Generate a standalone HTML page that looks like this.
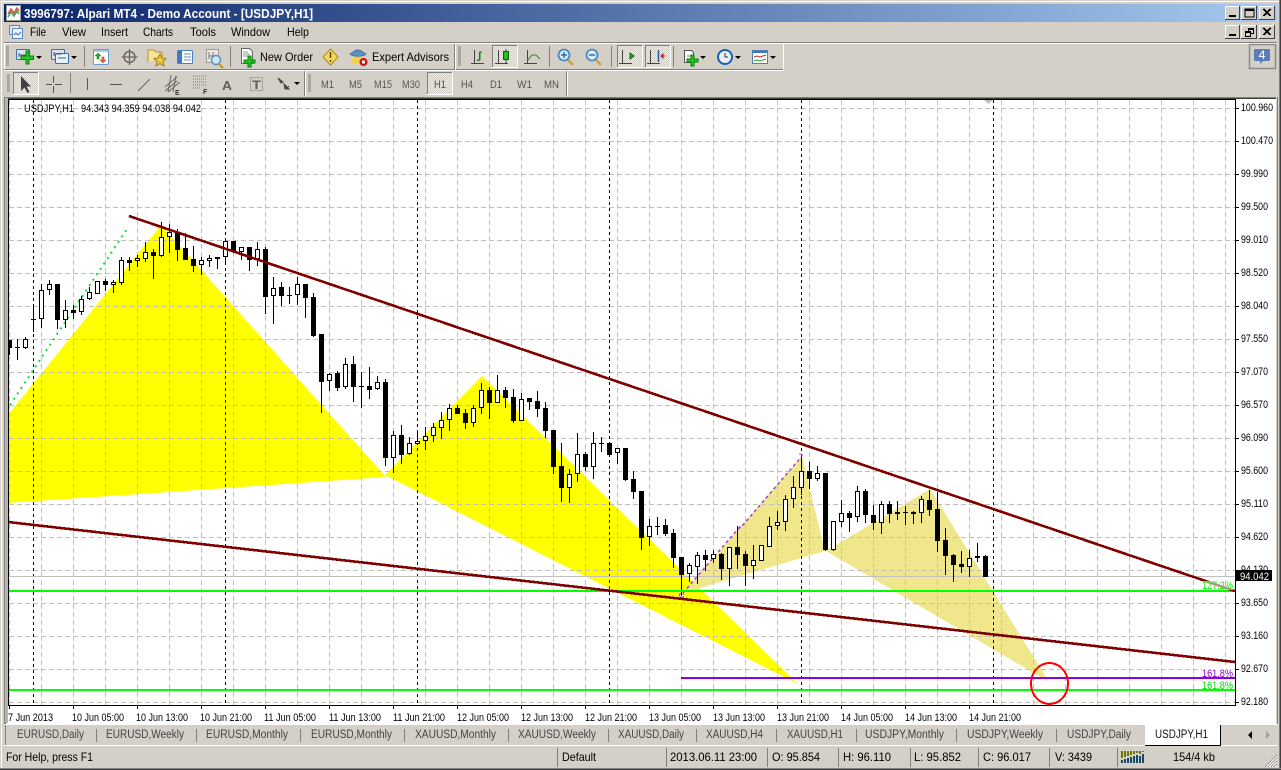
<!DOCTYPE html>
<html><head><meta charset="utf-8"><title>MT4</title>
<style>
html,body{margin:0;padding:0;background:#d4d0c8;overflow:hidden}
svg{display:block}
text{font-family:"Liberation Sans",sans-serif;font-size:11px;fill:#000;white-space:pre}
.ax{font-size:11px}
.tl{font-size:11px;fill:#000}
.tab{font-size:11.500px;fill:#444}
.tf{font-size:11px;fill:#555}
.c{shape-rendering:crispEdges}
</style></head><body>
<svg width="1281" height="770" viewBox="0 0 1281 770" xmlns="http://www.w3.org/2000/svg">
<defs>
<linearGradient id="tg" x1="0" x2="1" y1="0" y2="0"><stop offset="0" stop-color="#0a246a"/><stop offset="1" stop-color="#a6caf0"/></linearGradient>
<pattern id="chk" width="2" height="2" patternUnits="userSpaceOnUse"><rect width="2" height="2" fill="#ebe9e5"/><rect width="1" height="1" fill="#d4d0c8"/><rect x="1" y="1" width="1" height="1" fill="#d4d0c8"/></pattern>
<clipPath id="yc"><polygon points="8,415 161,225 386,477 8,503"/><polygon points="385,475 482,376 798,684"/></clipPath>
<clipPath id="pl"><rect x="9" y="100" width="1226" height="605"/></clipPath>
</defs>
<rect width="1281" height="770" fill="#d4d0c8"/>
<g class="c">
<rect x="1" y="1" width="1278" height="1" fill="#fff"/>
<rect x="1" y="1" width="1" height="767" fill="#fff"/>
<rect x="1279" y="0" width="1" height="769" fill="#808080"/>
<rect x="1280" y="0" width="1" height="770" fill="#404040"/>
<rect x="0" y="768" width="1281" height="1" fill="#808080"/>
<rect x="0" y="769" width="1281" height="1" fill="#404040"/>
<rect x="4" y="4" width="1273" height="18" fill="url(#tg)"/>
</g>
<rect x="6.500" y="5.500" width="14" height="15" fill="#fff" stroke="#999"/>
<path d="M8 14l3-5 3 4 3-5 2 3" fill="none" stroke="#d05040" stroke-width="1.500"/>
<path d="M8 17l3-5 3 4 3-5 2 3" fill="none" stroke="#40a060" stroke-width="1.500"/>
<text x="24" y="18" textLength="289" lengthAdjust="spacingAndGlyphs" style="font-weight:bold;font-size:13px;fill:#fff">3996797: Alpari MT4 - Demo Account - [USDJPY,H1]</text>
<g class="c">
<rect x="1225" y="6" width="15" height="14" fill="#404040"/><rect x="1225" y="6" width="14" height="13" fill="#fff"/><rect x="1226" y="7" width="13" height="12" fill="#d4d0c8"/>
<rect x="1241" y="6" width="16" height="14" fill="#404040"/><rect x="1241" y="6" width="15" height="13" fill="#fff"/><rect x="1242" y="7" width="14" height="12" fill="#d4d0c8"/>
<rect x="1259" y="6" width="16" height="14" fill="#404040"/><rect x="1259" y="6" width="15" height="13" fill="#fff"/><rect x="1260" y="7" width="14" height="12" fill="#d4d0c8"/>
<rect x="1229" y="15" width="7" height="2" fill="#000"/>
<rect x="1245" y="9" width="9" height="8" fill="none" stroke="#000"/><rect x="1245" y="9" width="9" height="2" fill="#000"/>
<rect x="1225" y="25" width="15" height="14" fill="#404040"/><rect x="1225" y="25" width="14" height="13" fill="#fff"/><rect x="1226" y="26" width="13" height="12" fill="#d4d0c8"/>
<rect x="1241" y="25" width="16" height="14" fill="#404040"/><rect x="1241" y="25" width="15" height="13" fill="#fff"/><rect x="1242" y="26" width="14" height="12" fill="#d4d0c8"/>
<rect x="1259" y="25" width="16" height="14" fill="#404040"/><rect x="1259" y="25" width="15" height="13" fill="#fff"/><rect x="1260" y="26" width="14" height="12" fill="#d4d0c8"/>
<rect x="1229" y="34" width="7" height="2" fill="#000"/>
<rect x="1248.500" y="28.500" width="5" height="5" fill="none" stroke="#000"/><rect x="1245.500" y="31.500" width="5" height="5" fill="#d4d0c8" stroke="#000"/><rect x="1245" y="31" width="6" height="2" fill="#000"/><rect x="1248" y="28" width="6" height="2" fill="#000"/>
</g>
<path d="M1263 9l7 7M1264 9l7 7M1270 9l-7 7M1271 9l-7 7M1263 28l7 7M1264 28l7 7M1270 28l-7 7M1271 28l-7 7" stroke="#000" class="c"/>
<rect x="9.500" y="25.500" width="10" height="9" fill="#dbe8f8" stroke="#5a88c0"/><rect x="12.500" y="28.500" width="10" height="10" fill="#eef4fc" stroke="#5a88c0"/><path d="M14 35l2-2 2 2 3-3" stroke="#4070b0" fill="none"/>
<text x="30" y="36" textLength="16" lengthAdjust="spacingAndGlyphs" style="font-size:12px">File</text>
<text x="62" y="36" textLength="24" lengthAdjust="spacingAndGlyphs" style="font-size:12px">View</text>
<text x="101" y="36" textLength="27" lengthAdjust="spacingAndGlyphs" style="font-size:12px">Insert</text>
<text x="143" y="36" textLength="30" lengthAdjust="spacingAndGlyphs" style="font-size:12px">Charts</text>
<text x="190" y="36" textLength="26" lengthAdjust="spacingAndGlyphs" style="font-size:12px">Tools</text>
<text x="231" y="36" textLength="39" lengthAdjust="spacingAndGlyphs" style="font-size:12px">Window</text>
<text x="287" y="36" textLength="22" lengthAdjust="spacingAndGlyphs" style="font-size:12px">Help</text>
<g class="c">
<rect x="4" y="42" width="1273" height="1" fill="#808080"/><rect x="4" y="43" width="1273" height="1" fill="#fff"/>
<rect x="4" y="43" width="1" height="26" fill="#fff"/>
<rect x="4" y="69" width="480" height="1" fill="#808080"/><rect x="4" y="70" width="480" height="1" fill="#fff"/>
<rect x="454" y="44" width="1" height="26" fill="#808080"/><rect x="455" y="44" width="1" height="26" fill="#fff"/>
<rect x="456" y="69" width="327" height="1" fill="#808080"/><rect x="456" y="70" width="328" height="1" fill="#fff"/>
<rect x="783" y="44" width="1" height="27" fill="#fff"/>
<rect x="304" y="71" width="1" height="25" fill="#808080"/><rect x="305" y="71" width="1" height="25" fill="#fff"/>
<rect x="566" y="71" width="1" height="25" fill="#808080"/><rect x="567" y="71" width="1" height="25" fill="#fff"/>
<path d="M6 47h3M6 49h3M6 51h3M6 53h3M6 55h3M6 57h3M6 59h3M6 61h3M6 63h3M6 65h3M458 47h3M458 49h3M458 51h3M458 53h3M458 55h3M458 57h3M458 59h3M458 61h3M458 63h3M458 65h3M7 75h3M7 77h3M7 79h3M7 81h3M7 83h3M7 85h3M7 87h3M7 89h3M7 91h3M308 75h3M308 77h3M308 79h3M308 81h3M308 83h3M308 85h3M308 87h3M308 89h3M308 91h3" stroke="#808080"/>
<path d="M84.500 46V67M230.500 46V67M549.500 46V67M611.500 46V67M673.500 46V67M70.500 73V93" stroke="#808080"/>
</g>
<g>
<rect x="16.500" y="49.500" width="13" height="10" rx="1" fill="#d6e6f8" stroke="#3a6ea5"/><path d="M19 53v4M19 55h8" stroke="#506070"/>
<path d="M26 51h3v5h4.500v3.500H29V64h-3v-4.500h-5V56h5z" fill="#22c822" stroke="#0a7a0a"/>
<path d="M36 56h6l-3 3z" fill="#000"/>
<rect x="51.500" y="49.500" width="13" height="10" rx="1" fill="#d6e6f8" stroke="#3a6ea5"/>
<rect x="55.500" y="53.500" width="13" height="10" rx="1" fill="#e6f0fb" stroke="#3a6ea5"/><path d="M54 52v4M54 54h8M58 58h8" stroke="#506070"/>
<path d="M71 56h6l-3 3z" fill="#000"/>
<rect x="93.500" y="49.500" width="15" height="15" rx="1" fill="#fff" stroke="#6a9ad0"/><rect x="94" y="50" width="14" height="2" fill="#a8c8ec"/>
<path d="M98 53l3 3h-2v3h-2v-3h-2z" fill="#22b022" stroke="#0a7a0a" stroke-width=".5"/><path d="M103 63l-3-3h2v-3h2v3h2z" fill="#e8603a" stroke="#b03010" stroke-width=".5"/>
<circle cx="129.500" cy="57" r="5.500" fill="none" stroke="#666" stroke-width="1.500"/><path d="M129.500 49v16M121.500 57h16" stroke="#666" stroke-width="1.300"/>
<path d="M148 62V50h6l2 2h6v8h-6" fill="#f6e49a" stroke="#b09030"/><path d="M160 54l2 4 4 .5-3 3 1 4.500-4-2.500-4 2.500 1-4.500-3-3 4-.5z" fill="#f2c838" stroke="#a08020"/>
<rect x="177.500" y="50.500" width="15" height="13" rx="1" fill="#fff" stroke="#4a80c0"/><rect x="178" y="51" width="4" height="12" fill="#3a78c8"/><path d="M184 54h7M184 57h7M184 60h7" stroke="#6090c0"/>
<rect x="206.500" y="49.500" width="12" height="13" fill="#e8e8e4" stroke="#999"/><path d="M209 52v7M209 56h6M213 52v5" stroke="#777"/>
<circle cx="216" cy="60" r="4.500" fill="#cfe6f8" stroke="#6090c0" stroke-width="1.500"/><path d="M219 64l4 4" stroke="#d09020" stroke-width="2"/>
<path d="M241.500 48.500h8l3 3v12h-11z" fill="#fff" stroke="#666"/><path d="M243 52h5M243 54h7M243 56h7" stroke="#999"/>
<path d="M248 56h3v4h4v3h-4v4h-3v-4h-4v-3h4z" fill="#22c822" stroke="#0a7a0a"/>
<path d="M330.500 49l7.500 8-7.500 8-7.500-8z" fill="#f6d858" stroke="#b08818"/><path d="M330.500 52v6M330.500 60v2" stroke="#604000" stroke-width="1.500"/>
<path d="M351 60c0-5 14-5 15 0 0 5-15 6-15 0z" fill="#f2d050"/><path d="M350 54c3-1 4-4 8-4s5 3 8 4c-3 3-13 3-16 0z" fill="#5a90c8" stroke="#3a6090" stroke-width=".7"/>
<circle cx="363.500" cy="62" r="4" fill="#d01010"/><rect x="362" y="60.500" width="3" height="3" fill="#fff"/>
<rect x="492" y="45" width="25" height="23" fill="url(#chk)" class="c"/><path d="M492.500 68V45.500H517" stroke="#808080" fill="none" class="c"/><path d="M492 67.500h25.500V45" stroke="#fff" fill="none" class="c"/>
<rect x="617" y="45" width="25" height="23" fill="url(#chk)" class="c"/><path d="M617.500 68V45.500H642" stroke="#808080" fill="none" class="c"/><path d="M617 67.500h25.500V45" stroke="#fff" fill="none" class="c"/>
<rect x="645" y="45" width="25" height="23" fill="url(#chk)" class="c"/><path d="M645.500 68V45.500H670" stroke="#808080" fill="none" class="c"/><path d="M645 67.500h25.500V45" stroke="#fff" fill="none" class="c"/>
<path d="M474.500 50v14M471 63.500h13M498.500 50v14M495 63.500h13M527.500 50v14M524 63.500h13M622.500 50v14M619 63.500h13M650.500 50v14M647 63.500h13" stroke="#444" fill="none" class="c"/>
<path d="M479.500 52v8M479.500 52h2M477 60h2.500" stroke="#108010" stroke-width="1.500" fill="none" class="c"/>
<rect x="503.500" y="51.500" width="5" height="8" fill="#20c020" stroke="#106010"/><path d="M506 49v2M506 60v3" stroke="#106010"/>
<path d="M527 61l5-6 4 0 4 4" stroke="#2a8a2a" fill="none"/>
<path d="M630 53l4 3-4 3z" fill="#20b020" stroke="#106010"/>
<path d="M658.500 50v12" stroke="#2060a0" stroke-width="1.500"/><path d="M665 56l-4 0M661 56l2-2v4z" stroke="#c02020" fill="#c02020"/>
<circle cx="564" cy="55" r="5.500" fill="#d8ecfa" stroke="#4a88c8" stroke-width="1.800"/><path d="M561 55h6M564 52v6" stroke="#3070b0" stroke-width="1.500"/><path d="M568 60l5 5" stroke="#d0a030" stroke-width="2.500"/>
<circle cx="592" cy="55" r="5.500" fill="#d8ecfa" stroke="#4a88c8" stroke-width="1.800"/><path d="M589 55h6" stroke="#3070b0" stroke-width="1.500"/><path d="M596 60l5 5" stroke="#d0a030" stroke-width="2.500"/>
<path d="M684.500 50.500h7l2 2v10h-9z" fill="#fff" stroke="#555"/><path d="M687 56h6" stroke="#777"/>
<path d="M691 55h3v4h4v3h-4v4h-3v-4h-4v-3h4z" fill="#22c822" stroke="#0a7a0a"/>
<path d="M700 56h6l-3 3z" fill="#000"/>
<circle cx="725" cy="57" r="7" fill="#e8f0f8" stroke="#1a60b0" stroke-width="2"/><path d="M725 53v4h3" stroke="#333" fill="none"/>
<path d="M735 56h6l-3 3z" fill="#000"/>
<rect x="752.500" y="50.500" width="15" height="13" fill="#fff" stroke="#5080b0"/><rect x="753" y="51" width="14" height="2" fill="#3a78c0"/><path d="M754 57l3-1 3 1 3-1 3-1" stroke="#c03020" fill="none"/><path d="M754 61l3-1 3 1 3-1 3-1" stroke="#30a030" fill="none"/>
<path d="M770 56h6l-3 3z" fill="#000"/>
</g>
<text x="260" y="61" textLength="53" lengthAdjust="spacingAndGlyphs" style="font-size:12px">New Order</text>
<text x="372" y="61" textLength="77" lengthAdjust="spacingAndGlyphs" style="font-size:12px">Expert Advisors</text>
<rect x="1249.500" y="44.500" width="26" height="24" fill="none" stroke="#8a8a8a" stroke-width="1.500"/>
<path d="M1255 49h14a1 1 0 0 1 1 1v10a1 1 0 0 1-1 1h-6l-3 3v-3h-5a1 1 0 0 1-1-1V50a1 1 0 0 1 1-1z" fill="#5a7db5"/>
<text x="1258.500" y="59" textLength="7" lengthAdjust="spacingAndGlyphs" style="fill:#fff;font-size:12px">4</text>
<rect x="13" y="72" width="25" height="23" fill="url(#chk)" class="c"/><path d="M13.500 95V72.500H38" stroke="#808080" fill="none" class="c"/><path d="M13 94.500h25.500V72" stroke="#fff" fill="none" class="c"/>
<path d="M21 76v15l3.500-3.500 3 5.500 2-1-3-5.500h4.500z" fill="#404040"/>
<path d="M53.500 76v7M53.500 86v7M46 84.500h6M55 84.500h7" stroke="#555" class="c"/>
<path d="M87.500 78v12M110 84.500h12" stroke="#555" class="c"/><path d="M138 91l12-12" stroke="#666"/>
<path d="M165 87l12-10M165 91l12-10M168 92l12-10M171 75l-3 17M176 76l-3 16" stroke="#666"/>
<path d="M193 76h13M193 79h13M193 82h13M193 85h13M193 88h8" stroke="#777" stroke-dasharray="1 1"/>
<text x="175" y="95" style="font-size:7px;font-weight:bold;fill:#333">E</text>
<text x="203" y="94" style="font-size:7px;font-weight:bold;fill:#333">F</text>
<text x="222" y="90" textLength="10" lengthAdjust="spacingAndGlyphs" style="font-size:13px;font-weight:bold;fill:#606060">A</text>
<rect x="250.500" y="77.500" width="12" height="13" fill="none" stroke="#777" stroke-dasharray="1 1"/>
<text x="252" y="89" textLength="9" lengthAdjust="spacingAndGlyphs" style="font-size:12px;font-weight:bold;fill:#606060">T</text>
<path d="M278 78l5 4-2 1zM284 84l5 5h-4zM289 86l-3 3" fill="#444" stroke="#444"/>
<path d="M294 82h6l-3 3z" fill="#000"/>
<text x="321" y="88" class="tf" textLength="13" lengthAdjust="spacingAndGlyphs">M1</text>
<text x="349" y="88" class="tf" textLength="13" lengthAdjust="spacingAndGlyphs">M5</text>
<text x="374" y="88" class="tf" textLength="18" lengthAdjust="spacingAndGlyphs">M15</text>
<text x="402" y="88" class="tf" textLength="18" lengthAdjust="spacingAndGlyphs">M30</text>
<rect x="427" y="72" width="25" height="23" fill="url(#chk)" class="c"/><path d="M427.500 95V72.500H452" stroke="#808080" fill="none" class="c"/><path d="M427 94.500h25.500V72" stroke="#fff" fill="none" class="c"/>
<text x="434" y="88" class="tf" textLength="12" lengthAdjust="spacingAndGlyphs">H1</text>
<text x="461" y="88" class="tf" textLength="12" lengthAdjust="spacingAndGlyphs">H4</text>
<text x="490" y="88" class="tf" textLength="12" lengthAdjust="spacingAndGlyphs">D1</text>
<text x="517" y="88" class="tf" textLength="15" lengthAdjust="spacingAndGlyphs">W1</text>
<text x="544" y="88" class="tf" textLength="15" lengthAdjust="spacingAndGlyphs">MN</text>
<g class="c">
<rect x="4" y="97" width="1273" height="628" fill="#808080"/>
<rect x="5" y="98" width="1271" height="626" fill="#404040"/>
<rect x="6" y="99" width="1270" height="625" fill="#fff"/>
<rect x="5" y="98" width="3" height="625" fill="#b8b5ae"/>
<rect x="1276" y="97" width="1" height="628" fill="#d4d0c8"/>
<rect x="1277" y="97" width="1" height="628" fill="#808080"/>
<rect x="4" y="724" width="1274" height="1" fill="#fff"/>
</g>
<g clip-path="url(#pl)">
<polygon points="8,415 161,225 386,477 8,503" fill="#ffff00"/>
<polygon points="385,475 482,376 798,684" fill="#ffff00"/>
<polygon points="683,593 802,456 825,551" fill="#f0e68c"/>
<polygon points="826,551 930,489 1049,682" fill="#f0e68c"/>
<path class="c" d="M9 108H1235M9 141H1235M9 174H1235M9 207H1235M9 240H1235M9 273H1235M9 306H1235M9 339H1235M9 372H1235M9 405H1235M9 438H1235M9 471H1235M9 504H1235M9 537H1235M9 570H1235M9 603H1235M9 636H1235M9 669H1235M9 702H1235" transform="translate(0 .5)" stroke="#c0c0c0" stroke-dasharray="5 3" fill="none"/>
<path class="c" d="M9.500 100V705M41.500 100V705M73.500 100V705M105.500 100V705M137.500 100V705M169.500 100V705M201.500 100V705M233.500 100V705M265.500 100V705M297.500 100V705M329.500 100V705M361.500 100V705M393.500 100V705M425.500 100V705M457.500 100V705M489.500 100V705M521.500 100V705M553.500 100V705M585.500 100V705M617.500 100V705M649.500 100V705M681.500 100V705M713.500 100V705M745.500 100V705M777.500 100V705M809.500 100V705M841.500 100V705M873.500 100V705M905.500 100V705M937.500 100V705M969.500 100V705M1001.500 100V705M1033.500 100V705M1065.500 100V705M1097.500 100V705M1129.500 100V705M1161.500 100V705M1193.500 100V705M1225.500 100V705" stroke="#c0c0c0" stroke-dasharray="5 3" fill="none"/>
<path class="c" d="M33.500 100V705M225.500 100V705M417.500 100V705M609.500 100V705M801.500 100V705M993.500 100V705" stroke="#000" stroke-dasharray="3 3" fill="none"/>
<g clip-path="url(#yc)"><path class="c" d="M33.500 100V705M225.500 100V705M417.500 100V705M609.500 100V705" stroke="#0000ff" stroke-dasharray="3 3" fill="none"/></g>
<path class="c" d="M9 576.500H1235" stroke="#c0c0c0"/>
<path d="M10 405L127 229" stroke="#10e030" stroke-width="2" stroke-dasharray="2 4.500" fill="none"/>
<path d="M683 593L738 529L743 525L802 456" stroke="#9a40d8" stroke-width="1.500" stroke-dasharray="3 3" fill="none"/>
<rect x="679.500" y="594" width="4" height="3" fill="#fff" stroke="#9a40d8" stroke-dasharray="2 1"/>
<path d="M738 529v-2h3M802 456v-2h-3" stroke="#9a40d8" fill="none" stroke-dasharray="2 1"/>
<path class="c" fill="none" stroke="#000" d="M9.500 340V355M17.500 339V360M25.500 337V349M33.500 307V332M41.500 284V328M49.500 280V295M57.500 284V329M65.500 300V328M73.500 305V319M81.500 296V315M89.500 287V300M97.500 281V294M105.500 279V291M113.500 280V293M121.500 257V285M129.500 257V271M137.500 255V267M145.500 242V262M153.500 249V279M161.500 222V257M169.500 224V253M177.500 229V261M185.500 233V260M193.500 246V272M201.500 257V275M209.500 255V267M217.500 257V269M225.500 241V265M233.500 241V253M241.500 247V260M249.500 247V271M257.500 242V266M265.500 247V314M273.500 277V324M281.500 282V306M289.500 287V304M297.500 277V305M305.500 284V318M313.500 293V337M321.500 334V413M329.500 373V391M337.500 371V391M345.500 358V389M353.500 356V402M361.500 372V408M369.500 367V399M377.500 376V390M385.500 379V466M393.500 431V473M401.500 425V464M409.500 437V455M417.500 430V445M425.500 427V450M433.500 423V442M441.500 412V439M449.500 404V431M457.500 405V414M465.500 409V429M473.500 405V427M481.500 383V414M489.500 387V419M497.500 375V403M505.500 387V408M513.500 389V423M521.500 393V421M529.500 398V410M537.500 391V417M545.500 402V438M553.500 430V474M561.500 443V502M569.500 469V503M577.500 433V482M585.500 452V471M593.500 432V479M601.500 437V452M609.500 443V455M617.500 448V464M625.500 448V481M633.500 471V499M641.500 491V550M649.500 519V546M657.500 517V535M665.500 519V536M673.500 529V568M681.500 557V596M689.500 563V582M697.500 552V584M705.500 550V571M713.500 550V563M721.500 553V580M729.500 547V586M737.500 526V569M745.500 551V586M753.500 545V579M761.500 545V561M769.500 517V547M777.500 511V530M785.500 495V531M793.500 476V508M801.500 457V495M809.500 462V489M817.500 466V481M825.500 473V551M833.500 521V551M841.500 500V527M849.500 511V532M857.500 486V522M865.500 489V523M873.500 505V530M881.500 501V534M889.500 501V523M897.500 501V520M905.500 506V525M913.500 511V524M921.500 496V523M929.500 490V516M937.500 492V552M945.500 528V575M953.500 554V582M961.500 551V573M969.500 550V577M977.500 543V562M985.500 555V577"/>
<path class="c" fill="#000" d="M7 340h5V348h-5zM15 347h5v1h-5zM31 319h5v1h-5zM55 284h5V320h-5zM71 310h5V313h-5zM103 281h5V285h-5zM127 260h5V263h-5zM151 252h5V256h-5zM175 232h5V250h-5zM183 248h5V260h-5zM191 259h5V266h-5zM215 257h5V259h-5zM231 241h5V252h-5zM247 247h5V260h-5zM263 249h5V297h-5zM279 287h5V296h-5zM287 295h5v1h-5zM303 284h5V298h-5zM311 297h5V336h-5zM319 334h5V382h-5zM335 373h5V388h-5zM351 364h5V387h-5zM359 386h5v1h-5zM367 386h5V390h-5zM383 382h5V458h-5zM399 435h5V455h-5zM455 408h5V414h-5zM463 413h5V423h-5zM487 390h5V403h-5zM503 390h5V398h-5zM511 397h5V421h-5zM527 398h5V402h-5zM535 401h5V409h-5zM543 408h5V431h-5zM551 430h5V467h-5zM559 466h5V488h-5zM583 454h5V467h-5zM599 443h5v1h-5zM607 443h5V455h-5zM623 448h5V480h-5zM631 479h5V492h-5zM639 491h5V538h-5zM655 526h5v1h-5zM663 525h5V534h-5zM671 533h5V558h-5zM679 557h5V575h-5zM703 555h5V560h-5zM719 554h5V569h-5zM735 547h5V555h-5zM743 554h5V566h-5zM807 471h5V479h-5zM823 473h5V550h-5zM847 513h5V518h-5zM863 491h5V515h-5zM871 515h5V523h-5zM887 504h5V514h-5zM895 512h5V514h-5zM903 512h5v1h-5zM911 512h5V514h-5zM927 500h5V510h-5zM935 509h5V541h-5zM943 540h5V556h-5zM951 555h5V565h-5zM959 564h5V567h-5zM983 556h5V577h-5z"/>
<path class="c" fill="#fff" stroke="#000" d="M23.500 339.500h4V347.500h-4zM39.500 290.500h4V318.500h-4zM47.500 284.500h4V289.500h-4zM63.500 310.500h4V319.500h-4zM79.500 299.500h4V311.500h-4zM87.500 292.500h4V298.500h-4zM95.500 281.500h4V293.500h-4zM111.500 282.500h4V284.500h-4zM119.500 260.500h4V282.500h-4zM135.500 258.500h4V260.500h-4zM143.500 252.500h4V258.500h-4zM159.500 237.500h4V255.500h-4zM167.500 232.500h4V236.500h-4zM199.500 260.500h4V264.500h-4zM207.500 258.500h4V260.500h-4zM223.500 241.500h4V256.500h-4zM239.500 247.500h4V251.500h-4zM255.500 249.500h4V258.500h-4zM271.500 288.500h4V295.500h-4zM295.500 284.500h4V294.500h-4zM327.500 374.500h4V380.500h-4zM343.500 364.500h4V386.500h-4zM375.500 382.500h4V388.500h-4zM391.500 435.500h4V457.500h-4zM407.500 443.500h4V453.500h-4zM415.500 441.500h4V443.500h-4zM423.500 436.500h4V440.500h-4zM431.500 427.500h4V435.500h-4zM439.500 420.500h4V427.500h-4zM447.500 408.500h4V419.500h-4zM471.500 408.500h4V422.500h-4zM479.500 390.500h4V407.500h-4zM495.500 390.500h4V402.500h-4zM519.500 399.500h4V420.500h-4zM567.500 474.500h4V487.500h-4zM575.500 454.500h4V473.500h-4zM591.500 443.500h4V466.500h-4zM615.500 448.500h4V452.500h-4zM647.500 526.500h4V536.500h-4zM687.500 565.500h4V573.500h-4zM695.500 555.500h4V566.500h-4zM711.500 554.500h4V558.500h-4zM727.500 547.500h4V568.500h-4zM751.500 560.500h4V565.500h-4zM759.500 545.500h4V560.500h-4zM767.500 526.500h4V546.500h-4zM775.500 522.500h4V525.500h-4zM783.500 499.500h4V521.500h-4zM791.500 487.500h4V498.500h-4zM799.500 471.500h4V487.500h-4zM815.500 473.500h4V478.500h-4zM831.500 521.500h4V549.500h-4zM839.500 513.500h4V521.500h-4zM855.500 491.500h4V516.500h-4zM879.500 504.500h4V522.500h-4zM919.500 499.500h4V512.500h-4zM967.500 558.500h4V566.500h-4zM975.500 556.500h4V557.500h-4z"/>
<path class="c" d="M9 590H1235v2H9z" fill="#00ff00"/>
<path class="c" d="M9 689H1235v2H9z" fill="#00ff00"/>
<path class="c" d="M681 677H1235v2H681z" fill="#9400d3"/>
<path class="c" d="M129 216L1235 591" stroke="#800000" stroke-width="2.600" fill="none"/>
<path class="c" d="M8 522L1235 662" stroke="#800000" stroke-width="2.600" fill="none"/>
<ellipse class="c" cx="1049.500" cy="683.500" rx="18.500" ry="20.500" fill="none" stroke="#ff0000" stroke-width="2"/>
<rect x="1202" y="581" width="32" height="9" fill="#fff" fill-opacity=".55"/>
<rect x="1202" y="668" width="32" height="9" fill="#fff"/>
<rect x="1202" y="680" width="32" height="9" fill="#fff"/>
</g>
<text x="1202" y="589" class="ax" textLength="31" lengthAdjust="spacingAndGlyphs" style="fill:#00ff00">127,2%</text>
<text x="1202" y="677" class="ax" textLength="31" lengthAdjust="spacingAndGlyphs" style="fill:#9400d3">161,8%</text>
<text x="1202" y="689" class="ax" textLength="31" lengthAdjust="spacingAndGlyphs" style="fill:#00e000">161,8%</text>
<path class="c" d="M8.500 99.500H1235.500V705.500H8.500z" fill="none" stroke="#000"/>
<path d="M984 100h9l-4.500 4z" fill="#c0c0c0"/>
<text x="24" y="112" class="ax" textLength="50" lengthAdjust="spacingAndGlyphs">USDJPY,H1</text>
<text x="81" y="112" class="ax" textLength="120" lengthAdjust="spacingAndGlyphs">94.343 94.359 94.038 94.042</text>
<path class="c" stroke="#000" d="M1236 108.500h3M1236 141.500h3M1236 174.500h3M1236 207.500h3M1236 240.500h3M1236 273.500h3M1236 306.500h3M1236 339.500h3M1236 372.500h3M1236 405.500h3M1236 438.500h3M1236 471.500h3M1236 504.500h3M1236 537.500h3M1236 570.500h3M1236 603.500h3M1236 636.500h3M1236 669.500h3M1236 702.500h3M9.500 706v3M73.500 706v3M137.500 706v3M201.500 706v3M265.500 706v3M329.500 706v3M393.500 706v3M457.500 706v3M521.500 706v3M585.500 706v3M649.500 706v3M713.500 706v3M777.500 706v3M841.500 706v3M905.500 706v3M969.500 706v3"/>
<text class="ax" x="1241" y="111" textLength="32" lengthAdjust="spacingAndGlyphs">100.960</text>
<text class="ax" x="1241" y="144" textLength="32" lengthAdjust="spacingAndGlyphs">100.470</text>
<text class="ax" x="1241" y="177" textLength="27" lengthAdjust="spacingAndGlyphs">99.990</text>
<text class="ax" x="1241" y="210" textLength="27" lengthAdjust="spacingAndGlyphs">99.500</text>
<text class="ax" x="1241" y="243" textLength="27" lengthAdjust="spacingAndGlyphs">99.010</text>
<text class="ax" x="1241" y="276" textLength="27" lengthAdjust="spacingAndGlyphs">98.520</text>
<text class="ax" x="1241" y="309" textLength="27" lengthAdjust="spacingAndGlyphs">98.040</text>
<text class="ax" x="1241" y="342" textLength="27" lengthAdjust="spacingAndGlyphs">97.550</text>
<text class="ax" x="1241" y="375" textLength="27" lengthAdjust="spacingAndGlyphs">97.070</text>
<text class="ax" x="1241" y="408" textLength="27" lengthAdjust="spacingAndGlyphs">96.570</text>
<text class="ax" x="1241" y="441" textLength="27" lengthAdjust="spacingAndGlyphs">96.090</text>
<text class="ax" x="1241" y="474" textLength="27" lengthAdjust="spacingAndGlyphs">95.600</text>
<text class="ax" x="1241" y="507" textLength="27" lengthAdjust="spacingAndGlyphs">95.110</text>
<text class="ax" x="1241" y="540" textLength="27" lengthAdjust="spacingAndGlyphs">94.620</text>
<text class="ax" x="1241" y="573" textLength="27" lengthAdjust="spacingAndGlyphs">94.130</text>
<text class="ax" x="1241" y="606" textLength="27" lengthAdjust="spacingAndGlyphs">93.650</text>
<text class="ax" x="1241" y="639" textLength="27" lengthAdjust="spacingAndGlyphs">93.160</text>
<text class="ax" x="1241" y="672" textLength="27" lengthAdjust="spacingAndGlyphs">92.670</text>
<text class="ax" x="1241" y="705" textLength="27" lengthAdjust="spacingAndGlyphs">92.180</text>
<rect class="c" x="1236" y="570" width="36" height="11" fill="#000"/>
<text class="ax" x="1240" y="580" textLength="29" lengthAdjust="spacingAndGlyphs" style="fill:#fff">94.042</text>
<text class="tl" x="8" y="721" textLength="45" lengthAdjust="spacingAndGlyphs">7 Jun 2013</text>
<text class="tl" x="72" y="721" textLength="52" lengthAdjust="spacingAndGlyphs">10 Jun 05:00</text>
<text class="tl" x="136" y="721" textLength="52" lengthAdjust="spacingAndGlyphs">10 Jun 13:00</text>
<text class="tl" x="200" y="721" textLength="52" lengthAdjust="spacingAndGlyphs">10 Jun 21:00</text>
<text class="tl" x="264" y="721" textLength="52" lengthAdjust="spacingAndGlyphs">11 Jun 05:00</text>
<text class="tl" x="329" y="721" textLength="52" lengthAdjust="spacingAndGlyphs">11 Jun 13:00</text>
<text class="tl" x="393" y="721" textLength="52" lengthAdjust="spacingAndGlyphs">11 Jun 21:00</text>
<text class="tl" x="457" y="721" textLength="52" lengthAdjust="spacingAndGlyphs">12 Jun 05:00</text>
<text class="tl" x="521" y="721" textLength="52" lengthAdjust="spacingAndGlyphs">12 Jun 13:00</text>
<text class="tl" x="585" y="721" textLength="52" lengthAdjust="spacingAndGlyphs">12 Jun 21:00</text>
<text class="tl" x="649" y="721" textLength="52" lengthAdjust="spacingAndGlyphs">13 Jun 05:00</text>
<text class="tl" x="713" y="721" textLength="52" lengthAdjust="spacingAndGlyphs">13 Jun 13:00</text>
<text class="tl" x="777" y="721" textLength="52" lengthAdjust="spacingAndGlyphs">13 Jun 21:00</text>
<text class="tl" x="841" y="721" textLength="52" lengthAdjust="spacingAndGlyphs">14 Jun 05:00</text>
<text class="tl" x="905" y="721" textLength="52" lengthAdjust="spacingAndGlyphs">14 Jun 13:00</text>
<text class="tl" x="969" y="721" textLength="52" lengthAdjust="spacingAndGlyphs">14 Jun 21:00</text>
<g class="c">
<rect x="4" y="725" width="1273" height="20" fill="#d4d0c8"/>
<rect x="4" y="745" width="1273" height="1" fill="#fff"/>
<rect x="5" y="725" width="1" height="20" fill="#808080"/>
<path stroke="#808080" d="M96.500 729v13M196.500 729v13M300.500 729v13M404.500 729v13M508.500 729v13M608.500 729v13M696.500 729v13M776.500 729v13M856.500 729v13M956.500 729v13M1056.500 729v13"/>
<rect x="1145" y="724" width="76" height="22" fill="#fff"/>
<rect x="1220" y="725" width="1" height="21" fill="#000"/>
<rect x="1145" y="745" width="76" height="1" fill="#000"/>
</g>
<text class="tab" x="17" y="738" textLength="67" lengthAdjust="spacingAndGlyphs">EURUSD,Daily</text>
<text class="tab" x="106" y="738" textLength="78" lengthAdjust="spacingAndGlyphs">EURUSD,Weekly</text>
<text class="tab" x="206" y="738" textLength="82" lengthAdjust="spacingAndGlyphs">EURUSD,Monthly</text>
<text class="tab" x="311" y="738" textLength="81" lengthAdjust="spacingAndGlyphs">EURUSD,Monthly</text>
<text class="tab" x="415" y="738" textLength="81" lengthAdjust="spacingAndGlyphs">XAUUSD,Monthly</text>
<text class="tab" x="518" y="738" textLength="78" lengthAdjust="spacingAndGlyphs">XAUUSD,Weekly</text>
<text class="tab" x="618" y="738" textLength="66" lengthAdjust="spacingAndGlyphs">XAUUSD,Daily</text>
<text class="tab" x="706" y="738" textLength="57" lengthAdjust="spacingAndGlyphs">XAUUSD,H4</text>
<text class="tab" x="787" y="738" textLength="56" lengthAdjust="spacingAndGlyphs">XAUUSD,H1</text>
<text class="tab" x="865" y="738" textLength="79" lengthAdjust="spacingAndGlyphs">USDJPY,Monthly</text>
<text class="tab" x="967" y="738" textLength="76" lengthAdjust="spacingAndGlyphs">USDJPY,Weekly</text>
<text class="tab" x="1067" y="738" textLength="64" lengthAdjust="spacingAndGlyphs">USDJPY,Daily</text>
<text class="tab" x="1155" y="738" textLength="53" lengthAdjust="spacingAndGlyphs" style="fill:#111">USDJPY,H1</text>
<path d="M1252 731v8l-4-4z" fill="#000"/><path d="M1266 731v8l4-4z" fill="#a0a0a0"/>
<path class="c" stroke="#808080" d="M557.500 748v19M666.500 748v19M767.500 748v19M838.500 748v19M910.500 748v19M978.500 748v19M1049.500 748v19M1117.500 748v19"/>
<text x="6" y="761" textLength="87" lengthAdjust="spacingAndGlyphs" style="font-size:12px">For Help, press F1</text>
<text x="562" y="761" textLength="34" lengthAdjust="spacingAndGlyphs" style="font-size:12px">Default</text>
<text x="670" y="761" textLength="87" lengthAdjust="spacingAndGlyphs" style="font-size:12px">2013.06.11 23:00</text>
<text x="772" y="761" textLength="48" lengthAdjust="spacingAndGlyphs" style="font-size:12px">O: 95.854</text>
<text x="843" y="761" textLength="48" lengthAdjust="spacingAndGlyphs" style="font-size:12px">H: 96.110</text>
<text x="914" y="761" textLength="47" lengthAdjust="spacingAndGlyphs" style="font-size:12px">L: 95.852</text>
<text x="983" y="761" textLength="48" lengthAdjust="spacingAndGlyphs" style="font-size:12px">C: 96.017</text>
<text x="1055" y="761" textLength="37" lengthAdjust="spacingAndGlyphs" style="font-size:12px">V: 3439</text>
<text x="1173" y="761" textLength="42" lengthAdjust="spacingAndGlyphs" style="font-size:12px">154/4 kb</text>
<g class="c">
<path d="M1121 751v7h2v-7zM1124 751v6h2v-6zM1127 751v5h2v-5zM1130 751v4h2v-4zM1133 751v3h2v-3zM1136 751v2h2v-2zM1139 751v3h2v-3zM1142 751v1h2v-1z" fill="#6b7a00"/>
<path d="M1121 760v3h2v-3zM1124 759v4h2v-4zM1127 758v5h2v-5zM1130 757v6h2v-6zM1133 756v7h2v-7zM1136 755v8h2v-8zM1139 756v7h2v-7zM1142 754v9h2v-9z" fill="#1a4a6a"/>
</g>
<path d="M1265 767l12-12M1268 767l9-9M1271 767l6-6M1274 767l3-3" stroke="#808080"/>
<path d="M1266 767l11-11M1269 767l8-8M1272 767l5-5M1275 767l2-2" stroke="#fff"/>
</svg>
</body></html>
